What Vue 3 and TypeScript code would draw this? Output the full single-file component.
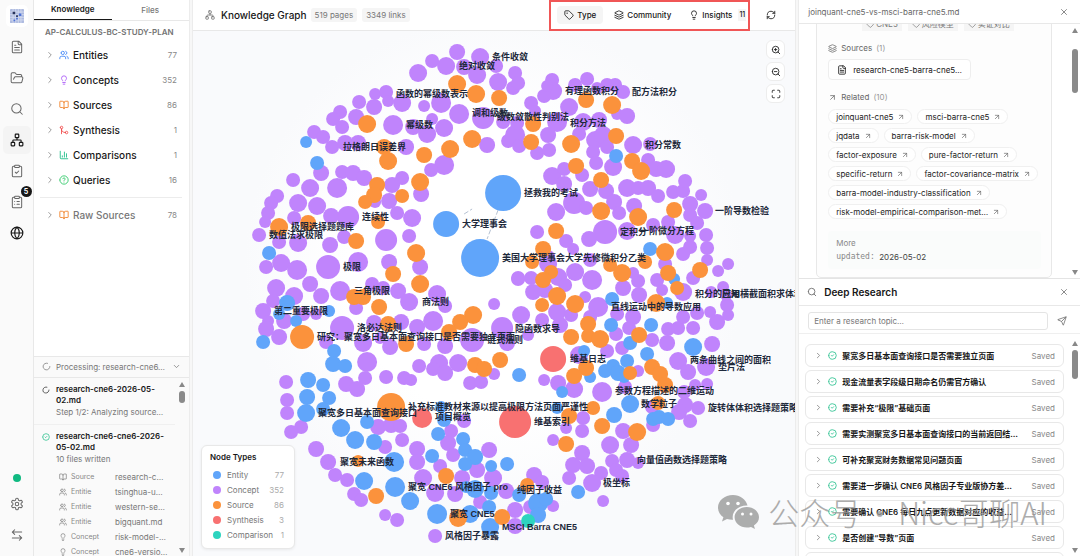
<script setup lang="ts">
import { h, ref } from 'vue'

type Node = [number, number, number]
type Label = [number, number, string]

const circle = (x: number, y: number, r: number) => `M${x - r} ${y}a${r} ${r} 0 1 0 ${r * 2} 0a${r} ${r} 0 1 0 ${-r * 2} 0`
const board = 'M9 2h6a1 1 0 0 1 1 1v2a1 1 0 0 1-1 1H9a1 1 0 0 1-1-1V3a1 1 0 0 1 1-1zM16 4h2a2 2 0 0 1 2 2v14a2 2 0 0 1-2 2H6a2 2 0 0 1-2-2V6a2 2 0 0 1 2-2h2'

const icons: Record<string, string> = {
  file: 'M15 2H6a2 2 0 0 0-2 2v16a2 2 0 0 0 2 2h12a2 2 0 0 0 2-2V7ZM14 2v4a2 2 0 0 0 2 2h4M10 9H8M16 13H8M16 17H8',
  folder: 'm6 14 1.5-2.9A2 2 0 0 1 9.24 10H20a2 2 0 0 1 1.94 2.5l-1.54 6a2 2 0 0 1-1.95 1.5H4a2 2 0 0 1-2-2V5a2 2 0 0 1 2-2h3.9a2 2 0 0 1 1.69.9l.81 1.2a2 2 0 0 0 1.67.9H18a2 2 0 0 1 2 2v2',
  search: circle(11, 11, 8) + 'M21 21l-4.3-4.3',
  network: 'M17 16h4a1 1 0 0 1 1 1v4a1 1 0 0 1-1 1h-4a1 1 0 0 1-1-1v-4a1 1 0 0 1 1-1zM3 16h4a1 1 0 0 1 1 1v4a1 1 0 0 1-1 1H3a1 1 0 0 1-1-1v-4a1 1 0 0 1 1-1zM10 2h4a1 1 0 0 1 1 1v4a1 1 0 0 1-1 1h-4a1 1 0 0 1-1-1V3a1 1 0 0 1 1-1zM5 16v-3a1 1 0 0 1 1-1h12a1 1 0 0 1 1 1v3M12 12V8',
  check: board + 'M9 14l2 2 4-4',
  list: board + 'M12 11h4M12 16h4M8 11h.01M8 16h.01',
  globe: circle(12, 12, 10) + 'M12 2a14.5 14.5 0 0 0 0 20 14.5 14.5 0 0 0 0-20M2 12h20',
  settings: 'M12.22 2h-.44a2 2 0 0 0-2 2v.18a2 2 0 0 1-1 1.73l-.43.25a2 2 0 0 1-2 0l-.15-.08a2 2 0 0 0-2.73.73l-.22.38a2 2 0 0 0 .73 2.73l.15.1a2 2 0 0 1 1 1.72v.51a2 2 0 0 1-1 1.74l-.15.09a2 2 0 0 0-.73 2.73l.22.38a2 2 0 0 0 2.73.73l.15-.08a2 2 0 0 1 2 0l.43.25a2 2 0 0 1 1 1.73V20a2 2 0 0 0 2 2h.44a2 2 0 0 0 2-2v-.18a2 2 0 0 1 1-1.73l.43-.25a2 2 0 0 1 2 0l.15.08a2 2 0 0 0 2.73-.73l.22-.39a2 2 0 0 0-.73-2.73l-.15-.08a2 2 0 0 1-1-1.74v-.5a2 2 0 0 1 1-1.74l.15-.09a2 2 0 0 0 .73-2.73l-.22-.38a2 2 0 0 0-2.73-.73l-.15.08a2 2 0 0 1-2 0l-.43-.25a2 2 0 0 1-1-1.73V4a2 2 0 0 0-2-2z' + circle(12, 12, 3),
  swap: 'M8 3 4 7l4 4M4 7h16M16 21l4-4-4-4M20 17H4',
  users: 'M16 21v-2a4 4 0 0 0-4-4H6a4 4 0 0 0-4 4v2' + circle(9, 7, 4) + 'M22 21v-2a4 4 0 0 0-3-3.87M16 3.13a4 4 0 0 1 0 7.75',
  bulb: 'M15 14c.2-1 .7-1.7 1.5-2.5 1-.9 1.5-2.2 1.5-3.5A6 6 0 0 0 6 8c0 1 .2 2.2 1.5 3.5.7.7 1.3 1.5 1.5 2.5M9 18h6M10 22h4',
  book: 'M12 7v14M3 18a1 1 0 0 1-1-1V4a1 1 0 0 1 1-1h5a4 4 0 0 1 4 4 4 4 0 0 1 4-4h5a1 1 0 0 1 1 1v13a1 1 0 0 1-1 1h-6a3 3 0 0 0-3 3 3 3 0 0 0-3-3z',
  merge: circle(18, 18, 3) + circle(6, 6, 3) + 'M6 21V9a9 9 0 0 0 9 9',
  chart: 'M3 3v16a2 2 0 0 0 2 2h16M18 17V9M13 17V5M8 17v-3',
  help: circle(12, 12, 10) + 'M9.09 9a3 3 0 0 1 5.83 1c0 2-3 3-3 3M12 17h.01',
  loader: 'M21 12a9 9 0 1 1-6.219-8.56',
  right: 'M9 18l6-6-6-6',
  down: 'M6 9l6 6 6-6',
  done: circle(12, 12, 10) + 'M9 12l2 2 4-4',
  tag: 'M12.586 2.586A2 2 0 0 0 11.172 2H4a2 2 0 0 0-2 2v7.172a2 2 0 0 0 .586 1.414l8.704 8.704a2.426 2.426 0 0 0 3.42 0l6.58-6.58a2.426 2.426 0 0 0 0-3.42z' + circle(7.5, 7.5, 0.5),
  layers: 'M12.83 2.18a2 2 0 0 0-1.66 0L2.6 6.08a1 1 0 0 0 0 1.83l8.58 3.91a2 2 0 0 0 1.66 0l8.58-3.9a1 1 0 0 0 0-1.83ZM22 17.65l-9.17 4.16a2 2 0 0 1-1.66 0L2 17.65M22 12.65l-9.17 4.16a2 2 0 0 1-1.66 0L2 12.65',
  refresh: 'M3 12a9 9 0 0 1 9-9 9.75 9.75 0 0 1 6.74 2.74L21 8M21 3v5h-5M21 12a9 9 0 0 1-9 9 9.75 9.75 0 0 1-6.74-2.74L3 16M8 16H3v5',
  zoomIn: circle(11, 11, 8) + 'M21 21l-4.35-4.35M11 8v6M8 11h6',
  zoomOut: circle(11, 11, 8) + 'M21 21l-4.35-4.35M8 11h6',
  fit: 'M8 3H5a2 2 0 0 0-2 2v3M21 8V5a2 2 0 0 0-2-2h-3M3 16v3a2 2 0 0 0 2 2h3M16 21h3a2 2 0 0 0 2-2v-3',
  close: 'M18 6 6 18M6 6l12 12',
  link: 'M7 7h10v10M7 17 17 7',
  send: 'M14.536 21.686a.5.5 0 0 0 .937-.024l6.5-19a.496.496 0 0 0-.635-.635l-19 6.5a.5.5 0 0 0-.024.937l7.93 3.18a2 2 0 0 1 1.112 1.11zM21.854 2.147l-10.94 10.939',
}

const Icon = (props: { name: string }) =>
  h('svg', { class: 'icon', viewBox: '0 0 24 24', 'aria-hidden': 'true' }, [h('path', { d: icons[props.name] })])
Icon.props = ['name']

const rail = [
  { icon: 'file', label: 'Documents' },
  { icon: 'folder', label: 'Folders' },
  { icon: 'search', label: 'Search' },
  { icon: 'network', label: 'Graph', active: true },
  { icon: 'check', label: 'Tasks' },
  { icon: 'list', label: 'Queue', badge: 5 },
  { icon: 'globe', label: 'Web', strong: true },
]

const tree = [
  { name: 'Entities', count: 77, icon: 'users', tone: 'blue' },
  { name: 'Concepts', count: 352, icon: 'bulb', tone: 'purple' },
  { name: 'Sources', count: 86, icon: 'book', tone: 'orange' },
  { name: 'Synthesis', count: 1, icon: 'merge', tone: 'red' },
  { name: 'Comparisons', count: 1, icon: 'chart', tone: 'teal' },
  { name: 'Queries', count: 16, icon: 'help', tone: 'green' },
]

const written = [
  { icon: 'book', kind: 'Source', file: 'research-c…' },
  { icon: 'users', kind: 'Entitie', file: 'tsinghua-u…' },
  { icon: 'users', kind: 'Entitie', file: 'western-se…' },
  { icon: 'users', kind: 'Entitie', file: 'bigquant.md' },
  { icon: 'bulb', kind: 'Concept', file: 'risk-model-…' },
  { icon: 'bulb', kind: 'Concept', file: 'cne6-versio…' },
]

const legend = [
  { name: 'Entity', count: 77, tone: 'entity' },
  { name: 'Concept', count: 352, tone: 'concept' },
  { name: 'Source', count: 86, tone: 'source' },
  { name: 'Synthesis', count: 3, tone: 'synthesis' },
  { name: 'Comparison', count: 1, tone: 'comparison' },
]

const related = [
  'joinquant-cne5', 'msci-barra-cne5', 'jqdata', 'barra-risk-model', 'factor-exposure', 'pure-factor-return',
  'specific-return', 'factor-covariance-matrix', 'barra-model-industry-classification', 'risk-model-empirical-comparison-met…',
]

const topic = ref('')
const research = [
  '聚宽多日基本面查询接口是否需要独立页面',
  '现金流量表字段级日期命名仍需官方确认',
  '需要补充“极限”基础页面',
  '需要实测聚宽多日基本面查询接口的当前返回结…',
  '可补充聚宽财务数据常见问题页面',
  '需要进一步确认 CNE6 风格因子专业版协方差…',
  '需要确认 CNE6 每日九点更新数据对应的收益…',
  '是否创建“导数”页面',
  '是否创建“积分”页面',
]

const concept: Node[] = [
  [418, 73, 9], [432, 61, 7], [446, 66, 9], [457, 52, 8], [464, 67, 8], [480, 57, 9], [496, 66, 7], [477, 75, 9], [498, 82, 9],
  [513, 88, 7], [515, 73, 7], [518, 83, 7], [375, 94, 6], [386, 92, 7], [388, 101, 6], [374, 107, 8], [359, 102, 7], [356, 117, 8],
  [340, 112, 7], [333, 119, 7], [342, 127, 7], [402, 103, 9], [393, 125, 10], [424, 106, 6], [441, 103, 10], [459, 114, 10],
  [483, 118, 11], [432, 119, 6], [413, 127, 8], [427, 134, 9], [444, 128, 9], [314, 132, 7], [323, 137, 7], [332, 147, 7],
  [345, 143, 8], [358, 143, 8], [406, 147, 8], [487, 145, 8], [503, 122, 7], [508, 141, 7], [515, 135, 10], [519, 146, 7],
  [444, 165, 10], [431, 170, 7], [402, 178, 7], [392, 185, 8], [389, 201, 8], [375, 202, 6], [421, 194, 8], [342, 172, 7],
  [353, 173, 8], [364, 178, 8], [337, 188, 10], [321, 173, 8], [293, 180, 7], [310, 188, 9], [298, 203, 9], [317, 206, 9],
  [277, 196, 7], [271, 203, 7], [268, 213, 7], [265, 222, 6], [348, 217, 11], [331, 216, 8], [294, 218, 7], [298, 243, 9],
  [279, 242, 7], [259, 235, 7], [330, 245, 8], [344, 237, 7], [397, 213, 7], [412, 218, 9], [386, 240, 11], [409, 236, 7],
  [328, 267, 12], [358, 262, 10], [281, 263, 9], [266, 267, 7], [297, 270, 10], [389, 262, 8], [420, 267, 8], [310, 284, 8],
  [276, 288, 9], [340, 291, 10], [321, 296, 8], [294, 296, 9], [372, 284, 7], [383, 288, 7], [398, 291, 8], [409, 302, 9],
  [437, 294, 9], [518, 278, 7], [494, 304, 6], [273, 301, 7], [263, 311, 8], [268, 321, 6], [266, 329, 8], [279, 337, 8],
  [284, 321, 8], [303, 314, 7], [316, 314, 6], [356, 308, 7], [342, 328, 12], [326, 342, 7], [374, 323, 8], [401, 322, 8],
  [433, 321, 10], [417, 327, 8], [445, 306, 7], [472, 340, 12], [502, 328, 11], [521, 315, 9], [507, 343, 8], [363, 343, 9],
  [390, 347, 8], [424, 344, 7], [445, 346, 8], [380, 338, 6], [367, 362, 10], [365, 378, 7], [346, 384, 8], [357, 389, 8],
  [386, 377, 7], [404, 378, 7], [411, 380, 6], [419, 366, 7], [439, 363, 9], [433, 369, 7], [445, 373, 8], [458, 363, 9],
  [470, 383, 7], [481, 382, 7], [494, 374, 6], [286, 382, 7], [287, 400, 7], [287, 413, 7], [301, 427, 7], [291, 432, 7],
  [316, 449, 8], [328, 462, 8], [335, 475, 7], [347, 480, 7], [354, 494, 7], [361, 500, 7], [385, 515, 6], [397, 520, 7],
  [435, 536, 7], [378, 427, 8], [391, 425, 8], [400, 426, 7], [402, 440, 7], [385, 447, 7], [417, 449, 8], [417, 462, 8],
  [423, 478, 9], [435, 493, 9], [455, 494, 8], [440, 466, 7], [462, 478, 8], [451, 431, 7], [448, 443, 8], [453, 455, 7],
  [464, 421, 7], [489, 450, 8], [477, 470, 8], [493, 478, 9], [506, 491, 8], [480, 502, 7], [515, 510, 8], [515, 526, 8],
  [552, 80, 7], [553, 91, 9], [544, 96, 7], [547, 86, 6], [531, 103, 7], [569, 107, 9], [575, 85, 7], [587, 79, 7],
  [597, 88, 6], [607, 85, 7], [615, 85, 7], [623, 92, 7], [617, 114, 6], [627, 116, 8], [599, 120, 8], [583, 122, 9],
  [579, 134, 7], [557, 122, 10], [517, 123, 7], [548, 135, 8], [537, 153, 7], [549, 150, 7], [535, 111, 6], [595, 140, 9],
  [603, 135, 9], [607, 147, 7], [593, 152, 7], [596, 163, 7], [613, 167, 9], [633, 145, 9], [650, 144, 7], [648, 160, 7],
  [656, 169, 8], [666, 169, 9], [552, 176, 9], [564, 169, 7], [582, 175, 7], [564, 184, 8], [574, 203, 11], [586, 208, 7],
  [590, 189, 8], [606, 191, 8], [556, 212, 9], [627, 188, 9], [638, 188, 7], [648, 188, 8], [658, 196, 7], [673, 192, 7],
  [683, 191, 7], [685, 181, 7], [701, 195, 6], [690, 204, 8], [705, 211, 8], [690, 215, 7], [697, 223, 7], [706, 235, 7],
  [707, 248, 7], [707, 260, 6], [690, 247, 7], [683, 254, 7], [675, 235, 9], [690, 236, 6], [668, 222, 7], [653, 225, 7],
  [634, 206, 8], [614, 202, 8], [619, 213, 7], [605, 232, 12], [627, 231, 9], [537, 232, 7], [589, 239, 8], [566, 241, 7],
  [573, 249, 6], [548, 257, 7], [665, 264, 7], [718, 271, 6], [728, 264, 6], [723, 287, 6], [711, 292, 6], [693, 278, 7],
  [683, 292, 9], [662, 290, 6], [657, 280, 7], [638, 281, 7], [633, 273, 6], [623, 288, 8], [639, 295, 8], [592, 280, 10],
  [575, 272, 9], [558, 277, 9], [531, 278, 7], [518, 279, 7], [533, 292, 8], [548, 264, 9], [565, 285, 7], [590, 260, 7],
  [585, 297, 6], [545, 290, 8], [542, 320, 7], [560, 325, 8], [557, 312, 9], [571, 315, 7], [598, 307, 10], [590, 317, 7],
  [528, 335, 6], [617, 314, 7], [633, 317, 8], [629, 328, 7], [616, 334, 7], [622, 348, 7], [652, 340, 7], [607, 351, 7],
  [579, 355, 9], [638, 371, 6], [625, 387, 7], [668, 329, 7], [678, 328, 7], [667, 343, 8], [693, 328, 7], [683, 317, 7],
  [712, 344, 8], [717, 322, 8], [710, 312, 6], [728, 315, 6], [727, 305, 7], [726, 295, 6], [697, 313, 7], [678, 361, 9], [688, 372, 8],
  [706, 367, 9], [695, 385, 6], [707, 384, 6], [684, 392, 7], [698, 408, 7], [685, 405, 8], [690, 421, 7], [679, 412, 8],
  [653, 425, 7], [652, 407, 7], [544, 380, 6], [558, 383, 8], [574, 389, 9], [602, 392, 10], [583, 418, 7], [566, 428, 6],
  [582, 431, 7], [553, 440, 6], [623, 431, 8], [631, 445, 8], [610, 445, 9], [582, 453, 8], [573, 465, 8], [587, 466, 8],
  [569, 478, 7], [601, 473, 7], [592, 483, 9], [612, 461, 7], [627, 460, 8], [638, 463, 6], [616, 470, 7], [622, 476, 7],
  [603, 501, 6], [534, 475, 8], [542, 482, 7], [553, 506, 6], [530, 507, 7],
]

const entity: Node[] = [
  [306, 142, 6], [317, 163, 7], [269, 253, 7], [503, 193, 18], [446, 224, 13], [480, 258, 19], [287, 303, 8], [279, 314, 6],
  [296, 321, 6], [329, 311, 6], [263, 342, 7], [334, 351, 7], [333, 364, 8], [345, 366, 7], [308, 380, 8], [307, 397, 8],
  [306, 413, 9], [323, 385, 7], [329, 398, 7], [323, 409, 7], [341, 428, 9], [355, 440, 9], [367, 422, 7], [374, 442, 8],
  [394, 462, 10], [364, 481, 9], [395, 487, 10], [410, 501, 9], [437, 514, 10], [470, 514, 9], [490, 527, 9], [432, 456, 7],
  [441, 407, 6], [444, 420, 7], [438, 434, 7], [463, 439, 7], [465, 450, 7], [475, 457, 8], [465, 464, 7], [491, 466, 6],
  [507, 464, 7], [475, 489, 9], [466, 487, 6], [491, 493, 7], [489, 507, 7], [519, 375, 7], [519, 495, 7], [616, 156, 7],
  [650, 249, 7], [674, 279, 6], [612, 299, 7], [611, 325, 7], [651, 325, 7], [630, 343, 7], [647, 354, 7], [693, 347, 9],
  [584, 351, 6], [627, 361, 7], [590, 377, 6], [605, 371, 7], [613, 366, 7], [618, 373, 8], [624, 377, 6], [562, 392, 6],
  [630, 404, 9], [614, 415, 8], [653, 419, 7], [659, 417, 7], [668, 419, 7], [557, 408, 6], [667, 303, 6], [578, 492, 7],
  [538, 503, 10], [546, 499, 7], [538, 515, 8],
]

const source: Node[] = [
  [457, 84, 9], [476, 94, 9], [499, 98, 8], [367, 124, 9], [424, 155, 8], [450, 149, 9], [472, 139, 9], [384, 147, 8],
  [388, 161, 9], [377, 185, 8], [374, 195, 8], [365, 202, 7], [420, 182, 9], [402, 196, 7], [378, 222, 7], [308, 223, 8],
  [279, 227, 9], [356, 241, 8], [416, 253, 9], [393, 274, 8], [420, 284, 9], [354, 297, 8], [363, 297, 8], [379, 307, 8],
  [473, 315, 9], [460, 322, 8], [302, 337, 12], [388, 324, 8], [406, 344, 8], [449, 332, 8], [475, 365, 8], [484, 369, 8],
  [500, 360, 8], [391, 407, 14], [376, 496, 8], [358, 461, 6], [446, 476, 8], [458, 518, 9], [502, 517, 8], [586, 100, 8],
  [612, 105, 9], [533, 124, 8], [531, 142, 8], [571, 144, 9], [616, 136, 8], [632, 161, 8], [641, 171, 9], [576, 166, 8],
  [601, 180, 8], [601, 211, 9], [638, 217, 9], [674, 210, 8], [556, 231, 8], [543, 249, 8], [665, 252, 9], [532, 262, 7],
  [645, 262, 7], [610, 265, 7], [622, 273, 9], [551, 272, 7], [543, 280, 8], [668, 273, 8], [700, 270, 8], [677, 288, 7],
  [542, 305, 7], [557, 296, 9], [575, 304, 9], [656, 303, 9], [588, 324, 8], [571, 337, 8], [588, 336, 7], [600, 339, 9],
  [639, 335, 8], [586, 368, 8], [574, 376, 8], [630, 373, 7], [652, 367, 8], [660, 374, 8], [665, 385, 8], [658, 403, 7],
  [593, 408, 7], [569, 416, 8], [602, 426, 8], [637, 432, 9], [566, 444, 8], [527, 485, 7],
]

const layers: { tone: string; nodes: Node[] }[] = [
  { tone: 'concept', nodes: concept },
  { tone: 'entity', nodes: entity },
  { tone: 'source', nodes: source },
  { tone: 'synthesis', nodes: [[422, 418, 10], [553, 359, 13], [515, 422, 16]] },
  { tone: 'comparison', nodes: [[528, 521, 7]] },
]

const labels: Label[] = [
  [492, 57, '条件收敛'], [459, 66, '绝对收敛'], [396, 94, '函数的幂级数表示'], [472, 113, '调和级数'], [497, 117, '级数敛散性判别法'],
  [570, 123, '积分方法'], [565, 91, '有理函数积分'], [632, 92, '配方法积分'], [406, 125, '幂级数'], [645, 145, '积分常数'],
  [343, 147, '拉格朗日误差界'], [524, 193, '拯救我的考试'], [362, 217, '连续性'], [462, 224, '大学理事会'], [291, 227, '极限选择题题库'],
  [269, 235, '数值法求极限'], [715, 211, '一阶导数检验'], [620, 232, '定积分'], [640, 231, '一阶微分方程'],
  [502, 258, '美国大学理事会大学先修微积分乙类'], [343, 267, '极限'], [354, 291, '三角极限'], [422, 302, '商法则'],
  [274, 311, '第二重要极限'], [357, 328, '洛必达法则'], [317, 337, '研究：聚宽多日基本面查询接口是否需要独立页面'], [487, 340, '链式法则'],
  [515, 329, '隐函数求导'], [611, 307, '直线运动中的导数应用'], [695, 294, '积分的应用'], [722, 294, '已知横截面积求体积'],
  [570, 359, '维基日志'], [690, 360, '两条曲线之间的面积'], [718, 367, '垫片法'], [615, 391, '参数方程描述的二维运动'],
  [641, 404, '数学粒子'], [408, 407, '补充标准教材来源以提高极限方法页面严谨性'], [318, 413, '聚宽多日基本面查询接口'], [435, 417, '项目概览'],
  [708, 408, '旋转体体积选择题策略'], [534, 422, '维基索引'], [340, 462, '聚宽未来函数'], [637, 460, '向量值函数选择题策略'],
  [408, 487, '聚宽 CNE6 风格因子 pro'], [517, 490, '纯因子收益'], [603, 483, '极坐标'], [450, 514, '聚宽 CNE5'],
  [502, 527, 'MSCI Barra CNE5'], [445, 536, '风格因子暴露'],
]
</script>

<template>
  <div class="app">
    <nav class="rail" aria-label="Main">
      <div class="logo">
        <svg viewBox="0 0 16 16" aria-hidden="true">
          <rect width="16" height="16" rx="1" fill="#aebbe0" />
          <path d="M0 3.5h16M0 6.5h16M0 9.5h16M0 12.5h16M3.5 0v16M6.5 0v16M9.5 0v16M12.5 0v16" stroke="#d5dcef" stroke-width="1" />
          <path d="M3 3h3v3H3zM7 7h2v2H7z" fill="#28345c" />
          <path d="M10 5h3v3h-3zM7 10h2v2H7zM4 12h2v2H4z" fill="#4f74d8" />
        </svg>
      </div>
      <button v-for="r in rail" :key="r.icon" type="button" class="rail-btn" :class="{ active: r.active, strong: r.strong }" :aria-label="r.label">
        <Icon :name="r.icon" />
        <span v-if="r.badge" class="badge">{{ r.badge }}</span>
      </button>
      <span class="status"></span>
      <button type="button" class="rail-btn" aria-label="Settings"><Icon name="settings" /></button>
      <button type="button" class="rail-btn" aria-label="Switch project"><Icon name="swap" /></button>
    </nav>

    <aside class="side">
      <div class="tabs" role="tablist">
        <button type="button" role="tab" class="tab on">Knowledge</button>
        <button type="button" role="tab" class="tab">Files</button>
      </div>
      <div class="tree">
        <h2>AP-CALCULUS-BC-STUDY-PLAN</h2>
        <button v-for="t in tree" :key="t.name" type="button" class="tree-row">
          <Icon name="right" class="chev" />
          <Icon :name="t.icon" :class="t.tone" />
          <span class="name">{{ t.name }}</span>
          <span class="count">{{ t.count }}</span>
        </button>
        <hr />
        <button type="button" class="tree-row raw">
          <Icon name="right" class="chev" />
          <Icon name="book" class="orange" />
          <span class="name">Raw Sources</span>
          <span class="count">78</span>
        </button>
      </div>
      <section class="activity">
        <button type="button" class="activity-head">
          <Icon name="loader" />
          <span>Processing: research-cne6…</span>
          <Icon name="down" />
        </button>
        <div class="activity-body">
          <div class="jobs">
            <div class="job">
              <Icon name="loader" />
              <div>
                <strong>research-cne6-2026-05-02.md</strong>
                <p>Step 1/2: Analyzing source…</p>
              </div>
            </div>
            <div class="job">
              <Icon name="done" class="ok" />
              <div>
                <strong>research-cne6-cne6-2026-05-02.md</strong>
                <p>10 files written</p>
                <ul>
                  <li v-for="w in written" :key="w.file">
                    <Icon :name="w.icon" />
                    <small>{{ w.kind }}</small>
                    <span>{{ w.file }}</span>
                  </li>
                </ul>
              </div>
            </div>
          </div>
          <div class="bar"><i class="up"></i><b class="thumb short"></b><i class="dn"></i></div>
        </div>
      </section>
    </aside>

    <div class="split"></div>

    <main class="main">
      <header class="main-head">
        <Icon name="network" class="muted" />
        <h1>Knowledge Graph</h1>
        <span class="pill">519 pages</span>
        <span class="pill">3349 links</span>
        <div class="tools">
          <button type="button" class="tool on"><Icon name="tag" />Type</button>
          <button type="button" class="tool"><Icon name="layers" />Community</button>
          <button type="button" class="tool"><Icon name="bulb" />Insights<span class="num">11</span></button>
          <button type="button" class="tool" aria-label="Refresh"><Icon name="refresh" /></button>
          <span class="marker"></span>
        </div>
      </header>
      <div class="canvas">
        <svg class="graph" viewBox="193 31 602 525" role="img" aria-label="Knowledge graph">
          <path class="edge" d="M498 210 487 239M464 214l8-5" />
          <g v-for="l in layers" :key="l.tone" :class="'fill-' + l.tone">
            <circle v-for="(n, i) in l.nodes" :key="i" :cx="n[0]" :cy="n[1]" :r="n[2]" />
          </g>
          <text v-for="(l, i) in labels" :key="i" :x="l[0]" :y="l[1] + 3">{{ l[2] }}</text>
        </svg>
        <div class="zoom">
          <button type="button" aria-label="Zoom in"><Icon name="zoomIn" /></button>
          <button type="button" aria-label="Zoom out"><Icon name="zoomOut" /></button>
          <button type="button" aria-label="Fit view"><Icon name="fit" /></button>
        </div>
        <div class="legend">
          <h3>Node Types</h3>
          <div v-for="l in legend" :key="l.name" class="legend-row">
            <i :class="'bg-' + l.tone"></i>
            <span>{{ l.name }}</span>
            <em>{{ l.count }}</em>
          </div>
        </div>
      </div>
    </main>

    <div class="split"></div>

    <aside class="right">
      <section class="preview">
        <header class="preview-head">
          <span>joinquant-cne5-vs-msci-barra-cne5.md</span>
          <button type="button" class="plain" aria-label="Close preview"><Icon name="close" /></button>
        </header>
        <div class="preview-body">
          <div class="scroller">
            <article class="card">
              <div class="tags">
                <span v-for="t in ['CNE5', '风险模型', '实证对比']" :key="t"><Icon name="tag" />{{ t }}</span>
              </div>
              <h4><Icon name="layers" />Sources <em>(1)</em></h4>
              <button type="button" class="source"><Icon name="file" />research-cne5-barra-cne5…</button>
              <h4><Icon name="link" />Related <em>(10)</em></h4>
              <div class="chips">
                <button v-for="r in related" :key="r" type="button">{{ r }}<Icon name="link" /></button>
              </div>
              <dl class="more">
                <dt class="more-title">More</dt>
                <dt>updated:</dt>
                <dd>2026-05-02</dd>
              </dl>
            </article>
          </div>
          <div class="bar"><i class="up"></i><b class="thumb long"></b><i class="dn"></i></div>
        </div>
      </section>
      <section class="deep">
        <header class="deep-head">
          <Icon name="search" />
          <h2>Deep Research</h2>
          <button type="button" class="plain" aria-label="Close research"><Icon name="close" /></button>
        </header>
        <form class="ask" @submit.prevent>
          <input v-model="topic" type="text" placeholder="Enter a research topic…" aria-label="Research topic" />
          <button type="submit" class="plain" aria-label="Send"><Icon name="send" /></button>
        </form>
        <div class="deep-body">
          <div class="results">
            <button v-for="r in research" :key="r" type="button" class="result">
              <Icon name="right" />
              <Icon name="done" class="ok" />
              <strong>{{ r }}</strong>
              <span>Saved</span>
            </button>
          </div>
          <div class="bar"><i class="up"></i><b class="thumb mid"></b><i class="dn"></i></div>
        </div>
      </section>
    </aside>

    <div class="watermark">
      <svg viewBox="0 0 42 34" aria-hidden="true">
        <path d="M15 0C6.500 0 0 5.600 0 12.600c0 4 2.100 7.400 5.400 9.700L4 26.500l5-2.600c2 .6 4 .9 6 .8-2-8 5-14.500 14.500-14.200C28 4.500 22 0 15 0z" />
        <path d="M41 22.300c0-5.700-5.500-10.300-12.200-10.300S16.600 16.600 16.600 22.300s5.500 10.300 12.200 10.300c1.500 0 2.900-.2 4.200-.6l4 2-1.100-3.500c3.100-1.900 5.100-4.800 5.100-8.200z" />
        <g fill="#fff"><circle cx="10" cy="8.500" r="1.800" /><circle cx="20" cy="8.500" r="1.800" /><circle cx="24.500" cy="19" r="1.500" /><circle cx="33" cy="19" r="1.500" /></g>
      </svg>
      <span>公众号</span><span>·</span><span>Nicc哥聊AI</span>
    </div>
  </div>
</template>

<style>
html,
body {
  margin: 0;
  height: 100%;
  overflow: hidden;
}
</style>

<style scoped>
.app {
  position: relative;
  display: flex;
  height: 100vh;
  overflow: hidden;
  background: #fff;
  color: #171717;
  font-family: Inter, 'Noto Sans CJK SC', sans-serif;
  font-size: 8px;
  line-height: 12px;
}
.app * {
  box-sizing: border-box;
}
button {
  margin: 0;
  padding: 0;
  border: 0;
  background: none;
  color: inherit;
  font: inherit;
  text-align: left;
}
h1, h2, h3, h4, p, ul, dl, dd {
  margin: 0;
  padding: 0;
}
em {
  font-style: normal;
  font-weight: 400;
}
.icon {
  flex: none;
  display: block;
  width: 10px;
  height: 10px;
  fill: none;
  stroke: currentColor;
  stroke-width: 2;
  stroke-linecap: round;
  stroke-linejoin: round;
}
.ok { color: #10b981; }
.muted { color: #737373; }

.rail {
  flex: none;
  display: flex;
  flex-direction: column;
  align-items: center;
  gap: 3px;
  width: 34px;
  padding: 5px 0 7px;
  border-right: 1px solid #e8e8e8;
  background: #fafafa;
}
.logo {
  display: grid;
  place-items: center;
  width: 22px;
  height: 22px;
  margin-bottom: 3px;
  border-radius: 5px;
  background: #fff;
}
.logo svg { width: 14px; height: 14px; }
.rail-btn {
  position: relative;
  display: grid;
  place-items: center;
  width: 28px;
  height: 28px;
  border-radius: 5px;
  color: #666;
}
.rail-btn .icon { width: 14px; height: 14px; stroke-width: 1.75; }
.rail-btn.active { background: #f4f4f4; }
.rail-btn.active, .rail-btn.strong { color: #171717; }
.rail-btn.active .icon, .rail-btn.strong .icon { stroke-width: 2; }
.badge {
  position: absolute;
  top: -2px;
  right: -1px;
  width: 11px;
  height: 11px;
  border-radius: 50%;
  background: #171717;
  color: #fff;
  font-size: 7px;
  font-weight: 700;
  line-height: 11px;
  text-align: center;
}
.status {
  width: 8px;
  height: 8px;
  margin: auto 0 5px;
  border-radius: 50%;
  background: #10b981;
}

.side {
  flex: none;
  display: flex;
  flex-direction: column;
  width: 155px;
}
.tabs {
  flex: none;
  display: flex;
  height: 21px;
  border-bottom: 1px solid #e8e8e8;
}
.tab {
  flex: 1;
  padding-bottom: 1px;
  color: #777;
  font-weight: 500;
  text-align: center;
}
.tab.on {
  border-bottom: 1px solid #171717;
  color: #171717;
  font-weight: 600;
}
.tree { flex: 1; min-height: 0; padding: 5px 7px 0 6px; }
.tree h2 {
  padding-left: 5px;
  color: #737373;
  font-size: 8px;
  font-weight: 600;
  line-height: 12px;
  white-space: nowrap;
  margin-bottom: 4px;
}
.tree-row {
  display: flex;
  align-items: center;
  width: 100%;
  height: 25px;
  padding: 0 5px;
  font-size: 10px;
  font-weight: 500;
}
.tree-row .chev { margin-right: 4px; color: #888; }
.tree-row .name { flex: 1; padding-left: 4px; }
.tree-row .count { color: #888; font-size: 8px; font-weight: 400; }
.tree-row.raw { color: #777; }
hr {
  height: 1px;
  margin: 5px 0 4px;
  border: 0;
  background: #ececec;
}
.blue { color: #3b82f6; }
.purple { color: #a855f7; }
.orange { color: #f07b1a; }
.red { color: #ef4444; }
.teal { color: #10b981; }
.green { color: #22c55e; }

.activity {
  flex: 0 0 36%;
  display: flex;
  flex-direction: column;
  min-height: 0;
  border-top: 1px solid #e8e8e8;
  background: #fafafa;
}
.activity-head {
  flex: none;
  display: flex;
  align-items: center;
  gap: 5px;
  height: 21px;
  padding: 0 8px;
  border-bottom: 1px solid #e8e8e8;
  color: #777;
}
.activity-head .icon { width: 9px; height: 9px; }
.activity-head span { flex: 1; white-space: nowrap; }
.activity-body { flex: 1; display: flex; min-height: 0; overflow: hidden; }
.jobs { flex: 1; min-width: 0; }
.job {
  display: grid;
  grid-template-columns: 8px 1fr;
  gap: 6px;
  padding: 6px 8px;
  border-bottom: 1px solid #f0f0f0;
}
.job > .icon { width: 8px; height: 8px; margin-top: 2px; }
.job strong { display: block; font-weight: 600; line-height: 11px; }
.job p { padding-top: 1px; color: #777; line-height: 11px; white-space: nowrap; }
.job ul { list-style: none; margin: 5px -8px 0 3px; padding: 0; }
.job li {
  display: grid;
  grid-template-columns: 8px 40px 1fr;
  align-items: center;
  gap: 4px;
  height: 15px;
  color: #777;
  white-space: nowrap;
}
.job li .icon { width: 8px; height: 8px; }
.job small { font-size: 7px; color: #888; }

.bar {
  flex: none;
  display: flex;
  flex-direction: column;
  align-items: center;
  width: 11px;
  padding: 4px 0 3px;
}
.activity .bar { width: 14px; }
.bar i { width: 0; height: 0; border: 3px solid transparent; }
.bar .up { border-top: 0; border-bottom: 5px solid #888; }
.bar .dn { margin-top: auto; border-bottom: 0; border-top: 5px solid #888; }
.bar .thumb { width: 6px; margin-top: 4px; border-radius: 3px; background: #8a8a8a; }
.thumb.short { height: 12px; }
.thumb.long { height: 44px; }
.thumb.mid { height: 29px; }
.preview .thumb { margin-top: 16px; }
.deep .bar { padding-top: 7px; }

.split {
  flex: none;
  width: 4px;
  border-left: 1px solid #ececec;
  border-right: 1px solid #ececec;
  background: #f7f7f7;
}
.main { flex: 1; display: flex; flex-direction: column; min-width: 0; }
.main-head {
  flex: none;
  display: flex;
  align-items: center;
  height: 31px;
  padding: 0 12px;
  border-bottom: 1px solid #e8e8e8;
  white-space: nowrap;
}
.main-head h1 { margin: 0 4px 0 6px; font-size: 10px; font-weight: 500; }
.pill {
  margin-right: 5px;
  padding: 1px 4px;
  border-radius: 3px;
  background: #f5f5f5;
  color: #777;
}
.tools { position: relative; display: flex; align-items: center; height: 30px; margin-left: auto; }
.tool {
  display: flex;
  align-items: center;
  gap: 3px;
  height: 18px;
  padding: 0 7px;
  border-radius: 4px;
  font-weight: 500;
}
.tool + .tool { margin-left: 4px; }
.tool.on { background: #f5f5f5; }
.tool:nth-of-type(4) { margin-left: 6px; }
.num { margin-left: 3px; padding: 0 1px; background: #f5f5f5; font-size: 7px; }
.marker {
  position: absolute;
  inset: 0 33px -1px -8px;
  border: 2px solid #f05656;
  pointer-events: none;
}
.canvas {
  position: relative;
  flex: 1;
  min-height: 0;
  overflow: hidden;
  background: radial-gradient(circle at 50% 45%, #fff 35%, #f9fafc 60%);
}
.graph { display: block; width: 100%; height: 100%; }
.graph text {
  fill: #1e293b;
  font: 600 9px 'Liberation Sans', 'Noto Sans CJK SC', sans-serif;
}
.edge { stroke: #b6c2d3; stroke-width: 1; stroke-dasharray: 5 2; }
.fill-concept { fill: #c084fc; }
.fill-entity { fill: #60a5fa; }
.fill-source { fill: #fb923c; }
.fill-synthesis { fill: #f87171; }
.fill-comparison { fill: #2dd4bf; }
.bg-concept { background: #c084fc; }
.bg-entity { background: #60a5fa; }
.bg-source { background: #fb923c; }
.bg-synthesis { background: #f87171; }
.bg-comparison { background: #2dd4bf; }
.zoom {
  position: absolute;
  top: 9px;
  right: 10px;
  display: grid;
  gap: 3px;
}
.zoom button {
  display: grid;
  place-items: center;
  width: 19px;
  height: 19px;
  border: 1px solid #ededed;
  border-radius: 6px;
  background: #fff;
}
.legend {
  position: absolute;
  left: 8px;
  bottom: 7px;
  width: 94px;
  padding: 4px 10px 6px 8px;
  border: 1px solid #e8e8e8;
  border-radius: 6px;
  background: #fff;
  box-shadow: 0 1px 3px #0001;
}
.legend h3 { font-size: 8px; font-weight: 600; line-height: 14px; margin-bottom: 3px; }
.legend-row { display: flex; align-items: center; height: 15px; color: #777; }
.legend-row i { width: 8px; height: 8px; margin: 0 6px 0 3px; border-radius: 50%; }
.legend-row span { flex: 1; }
.legend-row em { color: #aaa; }

.right { flex: none; display: flex; flex-direction: column; width: 26%; }
.preview { flex: 0 0 50%; display: flex; flex-direction: column; min-height: 0; }
.preview-head {
  flex: none;
  display: flex;
  align-items: center;
  justify-content: space-between;
  height: 24px;
  padding: 0 11px 0 9px;
  border-bottom: 1px solid #e8e8e8;
  color: #666;
}
.plain { color: #737373; }
.preview-body { flex: 1; display: flex; min-height: 0; overflow: hidden; }
.scroller { flex: 1; min-width: 0; overflow: hidden; padding: 0 17px; }
.card {
  margin-top: -15px;
  padding: 7px 10px 8px 11px;
  border: 1px solid #e8e8e8;
  border-radius: 5px;
  background: #fdfdfd;
}
.tags { display: flex; gap: 6px; padding-left: 34px; color: #777; }
.tags span { display: flex; align-items: center; gap: 2px; height: 14px; padding: 0 4px; background: #f5f5f5; }
.tags .icon { width: 8px; height: 8px; }
.card h4 {
  display: flex;
  align-items: center;
  gap: 4px;
  margin-top: 10px;
  color: #666;
  font-size: 8px;
  font-weight: 400;
  line-height: 14px;
}
.card h4 em { color: #999; }
.card h4 .icon { width: 9px; height: 9px; }
.source {
  display: flex;
  align-items: center;
  gap: 6px;
  height: 21px;
  margin-top: 4px;
  padding: 0 8px;
  border: 1px solid #eee;
  border-radius: 4px;
  background: #fff;
}
.chips { display: flex; flex-wrap: wrap; gap: 4px 5px; margin: 5px -4px 0 0; }
.chips button {
  display: flex;
  align-items: center;
  gap: 4px;
  height: 15px;
  padding: 0 6px 0 7px;
  border: 1px solid #f0f0f0;
  border-radius: 8px;
  background: #fff;
  color: #222;
}
.chips .icon { width: 8px; height: 8px; color: #666; }
.more {
  display: grid;
  grid-template-columns: 43px 1fr;
  margin-top: 12px;
  padding: 5px 8px;
  border-radius: 4px;
  background: #fafcfb;
  color: #888;
  line-height: 14px;
}
.more-title { grid-column: 1 / -1; }
.more dt:not(.more-title) { font-family: 'DejaVu Sans Mono', monospace; font-size: 8px; }
.more dd { color: #444; }

.deep { flex: 1; display: flex; flex-direction: column; min-height: 0; border-top: 1px solid #e4e4e4; }
.deep-head {
  flex: none;
  display: flex;
  align-items: center;
  gap: 7px;
  height: 27px;
  padding: 0 11px 0 8px;
  border-bottom: 1px solid #e8e8e8;
}
.deep-head h2 { flex: 1; font-size: 10px; font-weight: 600; }
.deep-head > .icon { color: #666; }
.ask {
  flex: none;
  display: flex;
  align-items: center;
  gap: 9px;
  padding: 6px 13px 3px 9px;
  border-bottom: 1px solid #efefef;
}
.ask input {
  flex: 1;
  min-width: 0;
  height: 18px;
  padding: 0 5px;
  border: 1px solid #e4e4e4;
  border-radius: 3px;
  background: #fff;
  color: #171717;
  font: inherit;
  outline: 0;
}
.ask input::placeholder { color: #777; opacity: 1; }
.deep-body { flex: 1; display: flex; min-height: 0; overflow: hidden; }
.results { flex: 1; min-width: 0; padding: 10px 5px 0 6px; }
.result {
  display: flex;
  align-items: center;
  width: 100%;
  height: 23px;
  margin-bottom: 3px;
  padding: 0 8px;
  border: 1px solid #e8e8e8;
  border-radius: 6px;
}
.result .icon { width: 9px; height: 9px; color: #777; }
.result .ok { margin: 0 5px; color: #10b981; }
.result strong {
  flex: 1;
  min-width: 0;
  overflow: hidden;
  font-weight: 600;
  text-overflow: ellipsis;
  white-space: nowrap;
}
.result span { margin-left: 6px; color: #888; }

.watermark {
  position: absolute;
  right: 33px;
  bottom: 22px;
  display: flex;
  align-items: center;
  color: #999;
  opacity: 0.8;
  font: 300 31px/44px 'Noto Sans CJK SC', sans-serif;
  pointer-events: none;
}
.watermark svg { width: 42px; height: 34px; margin-right: 8px; fill: #9a9a9a; }
.watermark span + span { margin-left: 3px; }
</style>
